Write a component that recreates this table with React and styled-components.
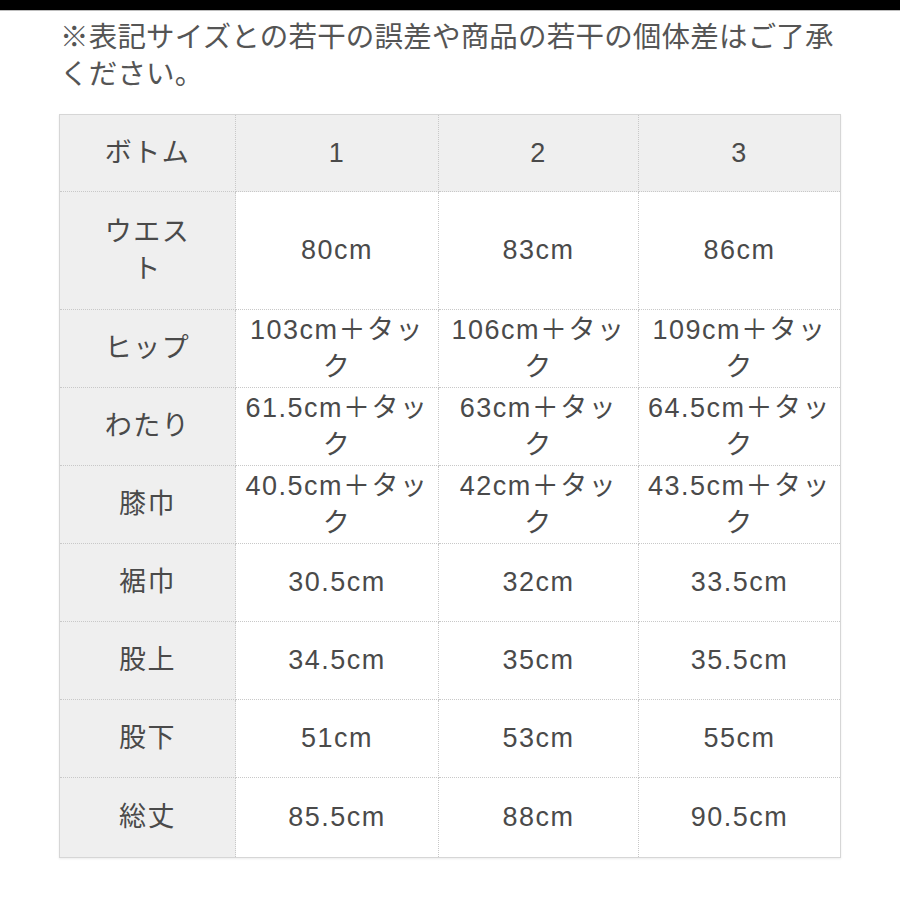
import React from 'react';
import styled, { createGlobalStyle } from 'styled-components';

const GlobalStyle = createGlobalStyle`
  body {
    margin: 0;
    background: #ffffff;
    font-family: 'Liberation Sans', 'Noto Sans CJK JP', sans-serif;
    color: #4a4a4a;
  }
`;

const columns = ['1', '2', '3'];

const rows = [
  { label: 'ウエス\nト', height: 118, values: ['80cm', '83cm', '86cm'] },
  {
    label: 'ヒップ',
    height: 78,
    values: ['103cm＋タッ\nク', '106cm＋タッ\nク', '109cm＋タッ\nク'],
  },
  {
    label: 'わたり',
    height: 78,
    values: ['61.5cm＋タッ\nク', '63cm＋タッ\nク', '64.5cm＋タッ\nク'],
  },
  {
    label: '膝巾',
    height: 78,
    values: ['40.5cm＋タッ\nク', '42cm＋タッ\nク', '43.5cm＋タッ\nク'],
  },
  { label: '裾巾', height: 78, values: ['30.5cm', '32cm', '33.5cm'] },
  { label: '股上', height: 78, values: ['34.5cm', '35cm', '35.5cm'] },
  { label: '股下', height: 78, values: ['51cm', '53cm', '55cm'] },
  { label: '総丈', height: 80, values: ['85.5cm', '88cm', '90.5cm'] },
];

export default function App() {
  return (
    <>
      <GlobalStyle />
      <TopBar />
      <Page>
        <Note>
          ※表記サイズとの若干の誤差や商品の若干の個体差はご了承
          <br />
          ください。
        </Note>
        <SizeTable>
          <colgroup>
            <col style={{ width: 176 }} />
            <col style={{ width: 203 }} />
            <col style={{ width: 200 }} />
            <col style={{ width: 202 }} />
          </colgroup>
          <thead>
            <tr>
              <Cell as="th" $shaded $height={77}>
                ボトム
              </Cell>
              {columns.map((c) => (
                <Cell as="th" key={c} $shaded $height={77}>
                  {c}
                </Cell>
              ))}
            </tr>
          </thead>
          <tbody>
            {rows.map((row) => (
              <tr key={row.label}>
                <Cell as="th" $shaded $height={row.height}>
                  {row.label}
                </Cell>
                {row.values.map((v, i) => (
                  <Cell key={i} $height={row.height}>
                    {v}
                  </Cell>
                ))}
              </tr>
            ))}
          </tbody>
        </SizeTable>
      </Page>
    </>
  );
}

const TopBar = styled.div`
  height: 10px;
  background: #000000;
  border-bottom: 1px solid #bdbdbd;
`;

const Page = styled.div`
  padding: 0 0 40px 59px;
`;

const Note = styled.p`
  margin: 0;
  padding: 5px 0 0 1px;
  font-family: 'Noto Sans CJK JP', sans-serif;
  font-size: 28.5px;
  line-height: 37px;
  letter-spacing: 0.2px;
  color: #555555;
  white-space: nowrap;
`;

const SizeTable = styled.table`
  margin-top: 24px;
  width: 781px;
  table-layout: fixed;
  border-collapse: collapse;
  border: 1px solid #d6d6d6;
  box-shadow: 0 1px 2px rgba(0, 0, 0, 0.08);
`;

const Cell = styled.td`
  height: ${(p) => p.$height}px;
  padding: 0;
  box-sizing: border-box;
  text-align: center;
  vertical-align: middle;
  font-weight: normal;
  font-size: 27px;
  line-height: 37px;
  letter-spacing: 1.5px;
  white-space: pre-line;
  color: #4a4a4a;
  background: ${(p) => (p.$shaded ? '#efefef' : '#ffffff')};
  border: 1px dotted #c8c8c8;
`;
